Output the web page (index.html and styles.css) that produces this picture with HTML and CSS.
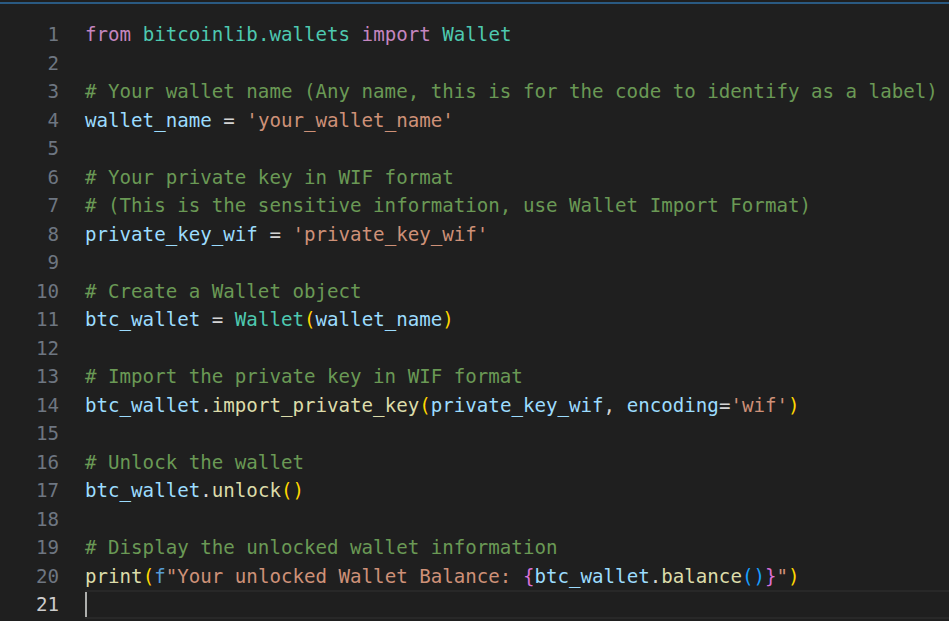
FILE: index.html
```html
<!DOCTYPE html>
<html>
<head>
<meta charset="utf-8">
<link rel="stylesheet" href="styles.css">
</head>
<body>
<div class="topbar"></div>
<div class="editor">
  <div class="line"><span class="ln">1</span><span class="code"><span class="kw">from</span> <span class="cls">bitcoinlib.wallets</span> <span class="kw">import</span> <span class="cls">Wallet</span></span></div>
  <div class="line"><span class="ln">2</span><span class="code"></span></div>
  <div class="line"><span class="ln">3</span><span class="code"><span class="cm"># Your wallet name (Any name, this is for the code to identify as a label)</span></span></div>
  <div class="line"><span class="ln">4</span><span class="code"><span class="var">wallet_name</span> <span class="op">=</span> <span class="str">'your_wallet_name'</span></span></div>
  <div class="line"><span class="ln">5</span><span class="code"></span></div>
  <div class="line"><span class="ln">6</span><span class="code"><span class="cm"># Your private key in WIF format</span></span></div>
  <div class="line"><span class="ln">7</span><span class="code"><span class="cm"># (This is the sensitive information, use Wallet Import Format)</span></span></div>
  <div class="line"><span class="ln">8</span><span class="code"><span class="var">private_key_wif</span> <span class="op">=</span> <span class="str">'private_key_wif'</span></span></div>
  <div class="line"><span class="ln">9</span><span class="code"></span></div>
  <div class="line"><span class="ln">10</span><span class="code"><span class="cm"># Create a Wallet object</span></span></div>
  <div class="line"><span class="ln">11</span><span class="code"><span class="var">btc_wallet</span> <span class="op">=</span> <span class="cls">Wallet</span><span class="b1">(</span><span class="var">wallet_name</span><span class="b1">)</span></span></div>
  <div class="line"><span class="ln">12</span><span class="code"></span></div>
  <div class="line"><span class="ln">13</span><span class="code"><span class="cm"># Import the private key in WIF format</span></span></div>
  <div class="line"><span class="ln">14</span><span class="code"><span class="var">btc_wallet</span><span class="op">.</span><span class="fn">import_private_key</span><span class="b1">(</span><span class="var">private_key_wif</span><span class="op">, </span><span class="var">encoding</span><span class="op">=</span><span class="str">'wif'</span><span class="b1">)</span></span></div>
  <div class="line"><span class="ln">15</span><span class="code"></span></div>
  <div class="line"><span class="ln">16</span><span class="code"><span class="cm"># Unlock the wallet</span></span></div>
  <div class="line"><span class="ln">17</span><span class="code"><span class="var">btc_wallet</span><span class="op">.</span><span class="fn">unlock</span><span class="b1">()</span></span></div>
  <div class="line"><span class="ln">18</span><span class="code"></span></div>
  <div class="line"><span class="ln">19</span><span class="code"><span class="cm"># Display the unlocked wallet information</span></span></div>
  <div class="line"><span class="ln">20</span><span class="code"><span class="fn">print</span><span class="b1">(</span><span class="fpre">f</span><span class="str">"Your unlocked Wallet Balance: </span><span class="b2">{</span><span class="var">btc_wallet</span><span class="op">.</span><span class="fn">balance</span><span class="b3">()</span><span class="b2">}</span><span class="str">"</span><span class="b1">)</span></span></div>
  <div class="line current"><span class="ln">21</span><span class="code"><span class="cursor"></span></span></div>
</div>
</body>
</html>
```
FILE: styles.css
```css
html, body {
  margin: 0;
  padding: 0;
  background: #1f1f1f;
  width: 949px;
  height: 621px;
  overflow: hidden;
}
.topbar {
  margin-top: 2px;
  height: 2px;
  background: #2a5a82;
}
.editor {
  padding-top: 16px;
  font-family: "DejaVu Sans Mono", "Liberation Mono", monospace;
  font-size: 19.15px;
  color: #d4d4d4;
}
.line {
  display: flex;
  height: 28.5px;
  line-height: 30px;
  white-space: pre;
}
.ln {
  width: 59px;
  flex: none;
  text-align: right;
  color: #6e7681;
  margin-right: 26px;
}
.code {
  flex: 1;
  display: block;
}
.current .ln { color: #cccccc; }
.current .code {
  display: flex;
  box-sizing: border-box;
  border-top: 2px solid #282828;
  border-bottom: 2px solid #282828;
}
.cursor {
  width: 2px;
  height: 100%;
  background: #aeafad;
}
.kw { color: #c586c0; }
.cls { color: #4ec9b0; }
.cm { color: #6a9955; }
.var { color: #9cdcfe; }
.str { color: #ce9178; }
.op { color: #d4d4d4; }
.fn { color: #dcdcaa; }
.fpre { color: #569cd6; }
.b1 { color: #ffd700; }
.b2 { color: #da70d6; }
.b3 { color: #179fff; }
```
